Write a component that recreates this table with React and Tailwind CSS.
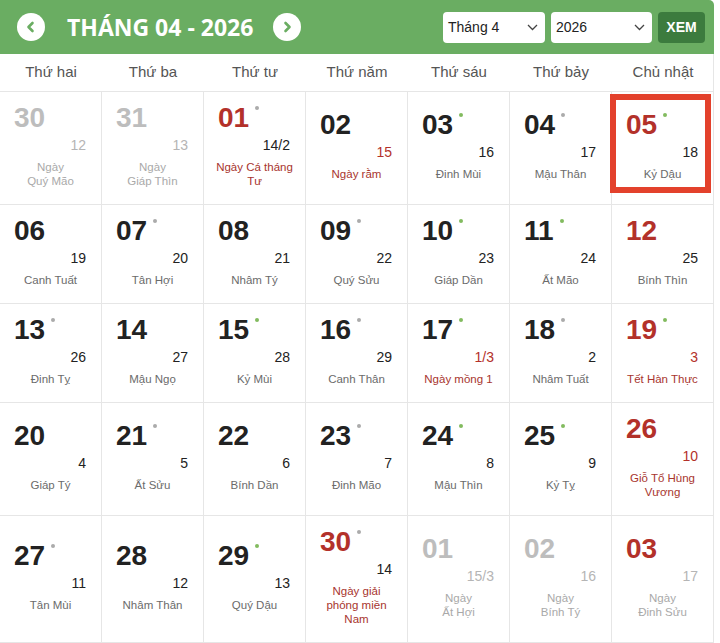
import React from "react";

const weekdays = ["Thứ hai", "Thứ ba", "Thứ tư", "Thứ năm", "Thứ sáu", "Thứ bảy", "Chủ nhật"];

// out = ngoài tháng; red = số đỏ; dot: "g" xám, "x" xanh
const days = [
  { d: "30", l: "12", t: ["Ngày", "Quý Mão"], out: true },
  { d: "31", l: "13", t: ["Ngày", "Giáp Thìn"], out: true },
  { d: "01", l: "14/2", t: ["Ngày Cá tháng", "Tư"], red: true, tRed: true, dot: "g" },
  { d: "02", l: "15", t: ["Ngày rằm"], tRed: true, lRed: true },
  { d: "03", l: "16", t: ["Đinh Mùi"], dot: "x" },
  { d: "04", l: "17", t: ["Mậu Thân"], dot: "g" },
  { d: "05", l: "18", t: ["Kỷ Dậu"], red: true, dot: "x", today: true },

  { d: "06", l: "19", t: ["Canh Tuất"] },
  { d: "07", l: "20", t: ["Tân Hợi"], dot: "g" },
  { d: "08", l: "21", t: ["Nhâm Tý"] },
  { d: "09", l: "22", t: ["Quý Sửu"], dot: "g" },
  { d: "10", l: "23", t: ["Giáp Dần"], dot: "x" },
  { d: "11", l: "24", t: ["Ất Mão"], dot: "x" },
  { d: "12", l: "25", t: ["Bính Thìn"], red: true },

  { d: "13", l: "26", t: ["Đinh Tỵ"], dot: "g" },
  { d: "14", l: "27", t: ["Mậu Ngọ"] },
  { d: "15", l: "28", t: ["Kỷ Mùi"], dot: "x" },
  { d: "16", l: "29", t: ["Canh Thân"], dot: "g" },
  { d: "17", l: "1/3", t: ["Ngày mồng 1"], tRed: true, lRed: true, dot: "x" },
  { d: "18", l: "2", t: ["Nhâm Tuất"], dot: "g" },
  { d: "19", l: "3", t: ["Tết Hàn Thực"], red: true, tRed: true, lRed: true, dot: "x" },

  { d: "20", l: "4", t: ["Giáp Tý"] },
  { d: "21", l: "5", t: ["Ất Sửu"], dot: "g" },
  { d: "22", l: "6", t: ["Bính Dần"] },
  { d: "23", l: "7", t: ["Đinh Mão"], dot: "g" },
  { d: "24", l: "8", t: ["Mậu Thìn"], dot: "x" },
  { d: "25", l: "9", t: ["Kỷ Tỵ"], dot: "x" },
  { d: "26", l: "10", t: ["Giỗ Tổ Hùng", "Vương"], red: true, tRed: true, lRed: true },

  { d: "27", l: "11", t: ["Tân Mùi"], dot: "g" },
  { d: "28", l: "12", t: ["Nhâm Thân"] },
  { d: "29", l: "13", t: ["Quý Dậu"], dot: "x" },
  { d: "30", l: "14", t: ["Ngày giải", "phóng miền", "Nam"], red: true, tRed: true, dot: "g" },
  { d: "01", l: "15/3", t: ["Ngày", "Ất Hợi"], out: true },
  { d: "02", l: "16", t: ["Ngày", "Bính Tý"], out: true },
  { d: "03", l: "17", t: ["Ngày", "Đinh Sửu"], out: true, red: true },
];

function Chevron({ dir }) {
  return (
    <svg width="14" height="14" viewBox="0 0 14 14" fill="none">
      <path
        d={dir === "left" ? "M8.5 3 L4.5 7 L8.5 11" : "M5.5 3 L9.5 7 L5.5 11"}
        stroke="#6aad62"
        strokeWidth="2.6"
        strokeLinecap="round"
        strokeLinejoin="round"
      />
    </svg>
  );
}

function FakeSelect({ value, width }) {
  return (
    <div className={`${width} h-[31px] bg-white rounded-[4px] flex items-center justify-between pl-[5px] pr-[7px] text-[14px] text-[#222]`}>
      <span>{value}</span>
      <svg width="11" height="7" viewBox="0 0 11 7" fill="none">
        <path d="M1 1 L5.5 5.5 L10 1" stroke="#444" strokeWidth="1.3" />
      </svg>
    </div>
  );
}

function DayCell({ day }) {
  const numColor = day.red ? "text-[#b3312a]" : day.out ? "text-[#bdbdbd]" : "text-[#222]";
  const lunarColor = day.out ? "text-[#b5b5b5]" : day.lRed ? "text-[#b3312a]" : "text-[#222]";
  const labelColor = day.out ? "text-[#a9a9a9]" : day.tRed ? "text-[#a8352e]" : "text-[#6b6b6b]";

  return (
    <div className="relative border-r border-b border-[#e6e6e6] flex flex-col justify-center pt-[12px] pb-[16px]">
      {day.today && (
        <div className="absolute top-[2px] bottom-[11px] left-[-2px] right-[2px] border-[6px] border-[#e3412c]" />
      )}
      <div className="flex items-start pl-[14px] h-[28px]">
        <span className={`text-[28px] leading-[28px] font-bold ${numColor}`}>{day.d}</span>
        {day.dot && (
          <span
            className={`ml-[6px] mt-[2px] w-[4px] h-[4px] rounded-full ${
              day.dot === "x" ? "bg-[#82bb5f]" : "bg-[#ababab]"
            }`}
          />
        )}
      </div>
      <div className={`mt-[5px] pr-[15px] text-right text-[14px] leading-[16px] ${lunarColor}`}>{day.l}</div>
      <div className={`mt-[7px] text-center text-[11.5px] leading-[14px] ${labelColor}`}>
        {day.t.map((line, i) => (
          <div key={i}>{line}</div>
        ))}
      </div>
    </div>
  );
}

export default function App() {
  return (
    <div className="w-[720px] min-h-[643px] bg-white" style={{ fontFamily: '"Liberation Sans", Arial, sans-serif' }}>
      <div className="w-[714px]">
        {/* Header */}
        <div className="h-[54px] bg-[#6aad62] rounded-tr-[5px] flex items-center pl-[17px] pr-[9px]">
          <button className="w-[28px] h-[28px] rounded-full bg-white flex items-center justify-center">
            <Chevron dir="left" />
          </button>
          <h1
            className="ml-[22px] text-white text-[23px] font-bold"
            style={{ fontFamily: '"Open Sans", sans-serif' }}
          >
            THÁNG 04 - 2026
          </h1>
          <button className="ml-[20px] w-[28px] h-[28px] rounded-full bg-white flex items-center justify-center">
            <Chevron dir="right" />
          </button>
          <div className="ml-auto flex items-center gap-[6px]">
            <FakeSelect value="Tháng 4" width="w-[102px]" />
            <FakeSelect value="2026" width="w-[101px]" />
            <button className="w-[47px] h-[31px] rounded-[4px] bg-[#3c7b3e] text-white text-[14px] font-bold">
              XEM
            </button>
          </div>
        </div>

        {/* Weekdays */}
        <div className="grid grid-cols-[repeat(7,102px)] h-[38px] border-b border-[#e6e6e6] border-r">
          {weekdays.map((w) => (
            <div key={w} className="flex items-center justify-center text-[15px] text-[#555]">
              {w}
            </div>
          ))}
        </div>

        {/* Days */}
        <div className="grid grid-cols-[repeat(7,102px)]">
          {days.map((day, i) => (
            <DayCell key={i} day={day} />
          ))}
        </div>
      </div>
    </div>
  );
}
